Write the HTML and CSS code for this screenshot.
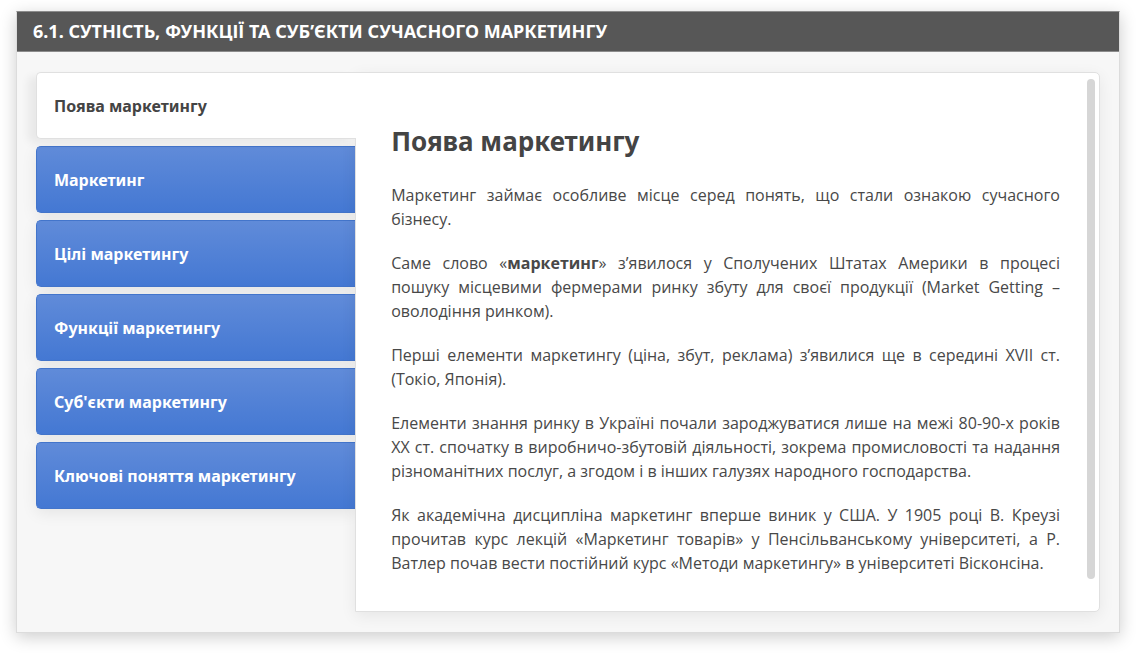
FILE: index.html
```html
<!DOCTYPE html>
<html lang="uk">
<head>
<meta charset="utf-8">
<title>Сутність, функції та суб’єкти сучасного маркетингу</title>
<link rel="stylesheet" href="styles.css">
</head>
<body>
<main class="page">
  <article class="card">
    <header class="card-header">
      <h1 class="card-title">6.1. СУТНІСТЬ, ФУНКЦІЇ ТА СУБ’ЄКТИ СУЧАСНОГО МАРКЕТИНГУ</h1>
    </header>
    <div class="card-body">
      <div class="tabs" role="tablist" aria-orientation="vertical">
        <button class="tab tab-active" type="button" role="tab" aria-selected="true" aria-controls="panel" id="tab-1">Поява маркетингу</button>
        <button class="tab" type="button" role="tab" aria-selected="false">Маркетинг</button>
        <button class="tab" type="button" role="tab" aria-selected="false">Цілі маркетингу</button>
        <button class="tab" type="button" role="tab" aria-selected="false">Функції маркетингу</button>
        <button class="tab" type="button" role="tab" aria-selected="false">Суб'єкти маркетингу</button>
        <button class="tab" type="button" role="tab" aria-selected="false">Ключові поняття маркетингу</button>
      </div>
      <section class="panel" id="panel" role="tabpanel" aria-labelledby="tab-1">
        <div class="content">
          <h2 class="content-title">Поява маркетингу</h2>
          <p>Маркетинг займає особливе місце серед понять, що стали ознакою сучасного бізнесу.</p>
          <p>Саме слово «<strong>маркетинг</strong>» з’явилося у Сполучених Штатах Америки в процесі пошуку&nbsp;місцевими фермерами ринку збуту для своєї продукції (Market Getting – оволодіння ринком).</p>
          <p>Перші елементи маркетингу (ціна, збут, реклама) з’явилися ще в середині XVII ст. (Токіо, Японія).</p>
          <p>Елементи знання ринку в Україні почали зароджуватися лише на межі 80-90-х років ХХ ст. спочатку в виробничо-збутовій діяльності, зокрема промисловості та надання різноманітних послуг, а згодом і в інших галузях народного господарства.</p>
          <p>Як академічна дисципліна маркетинг вперше виник у США. У 1905 році В. Креузі прочитав курс лекцій «Маркетинг товарів» у Пенсільванському університеті, а Р. Ватлер почав вести постійний курс «Методи маркетингу» в університеті Вісконсіна.</p>
        </div>
        <div class="scroll-track" aria-hidden="true"><div class="scroll-thumb"></div></div>
      </section>
    </div>
  </article>
</main>
</body>
</html>
```

FILE: styles.css
```css
* {
  box-sizing: border-box;
}

body {
  margin: 0;
  background: #fff;
  color: #484848;
  font: 16px/24px "Open Sans", "Noto Sans", sans-serif;
}

.page {
  padding: 11px 16px 20px;
}

.card {
  border: 1px solid #dcdcdc;
  border-top-color: #8c8c8c;
  background: #f7f7f7;
  box-shadow: 0 4px 16px rgba(0, 0, 0, 0.2);
}

.card-header {
  padding: 7px 16px 8px;
  border-bottom: 1px solid #8c8c8c;
  background: #575757;
}

.card-title {
  margin: 0;
  color: #fff;
  font-family: "Noto Sans", sans-serif;
  font-size: 18px;
  font-weight: 700;
  line-height: 24px;
}

.card-body {
  display: flex;
  align-items: stretch;
  padding: 20px 19px;
}

.tabs {
  display: flex;
  flex: 0 0 30%;
  flex-direction: column;
  gap: 7px;
}

.tab {
  height: 67px;
  padding: 0 17px;
  border: 1px solid #4375cb;
  border-right: 0;
  border-radius: 5px 0 0 5px;
  background: linear-gradient(#608bd9, #4478d3);
  box-shadow: 0 4px 16px rgba(0, 0, 0, 0.08);
  color: #fff;
  font-family: "Noto Sans", sans-serif;
  font-size: 16px;
  font-weight: 700;
  line-height: 24px;
  text-align: left;
}

.tab-active {
  position: relative;
  z-index: 1;
  margin-right: -1px;
  border-color: #e0e0e0;
  background: #fff;
  box-shadow: -8px 4px 8px rgba(0, 0, 0, 0.06);
  color: #444;
}

.panel {
  display: flex;
  flex: 1;
  min-width: 0;
  padding: 6px 4px 6px 35px;
  border: 1px solid #e0e0e0;
  border-radius: 0 5px 5px 0;
  background: #fff;
  box-shadow: 0 4px 16px rgba(0, 0, 0, 0.07);
}

.content {
  flex: 1;
  padding: 44px 27px 30px 0;
  text-align: justify;
}

.content-title {
  margin: 0 0 24px;
  color: #444;
  font-family: "Noto Sans", sans-serif;
  font-size: 26px;
  font-weight: 700;
  line-height: 36px;
}

.content p {
  margin: 0 0 20px;
}

.content p:last-child {
  margin-bottom: 0;
}

.scroll-track {
  width: 8px;
}

.scroll-thumb {
  height: 95%;
  border-radius: 4px;
  background: #d6d6d6;
}
```
